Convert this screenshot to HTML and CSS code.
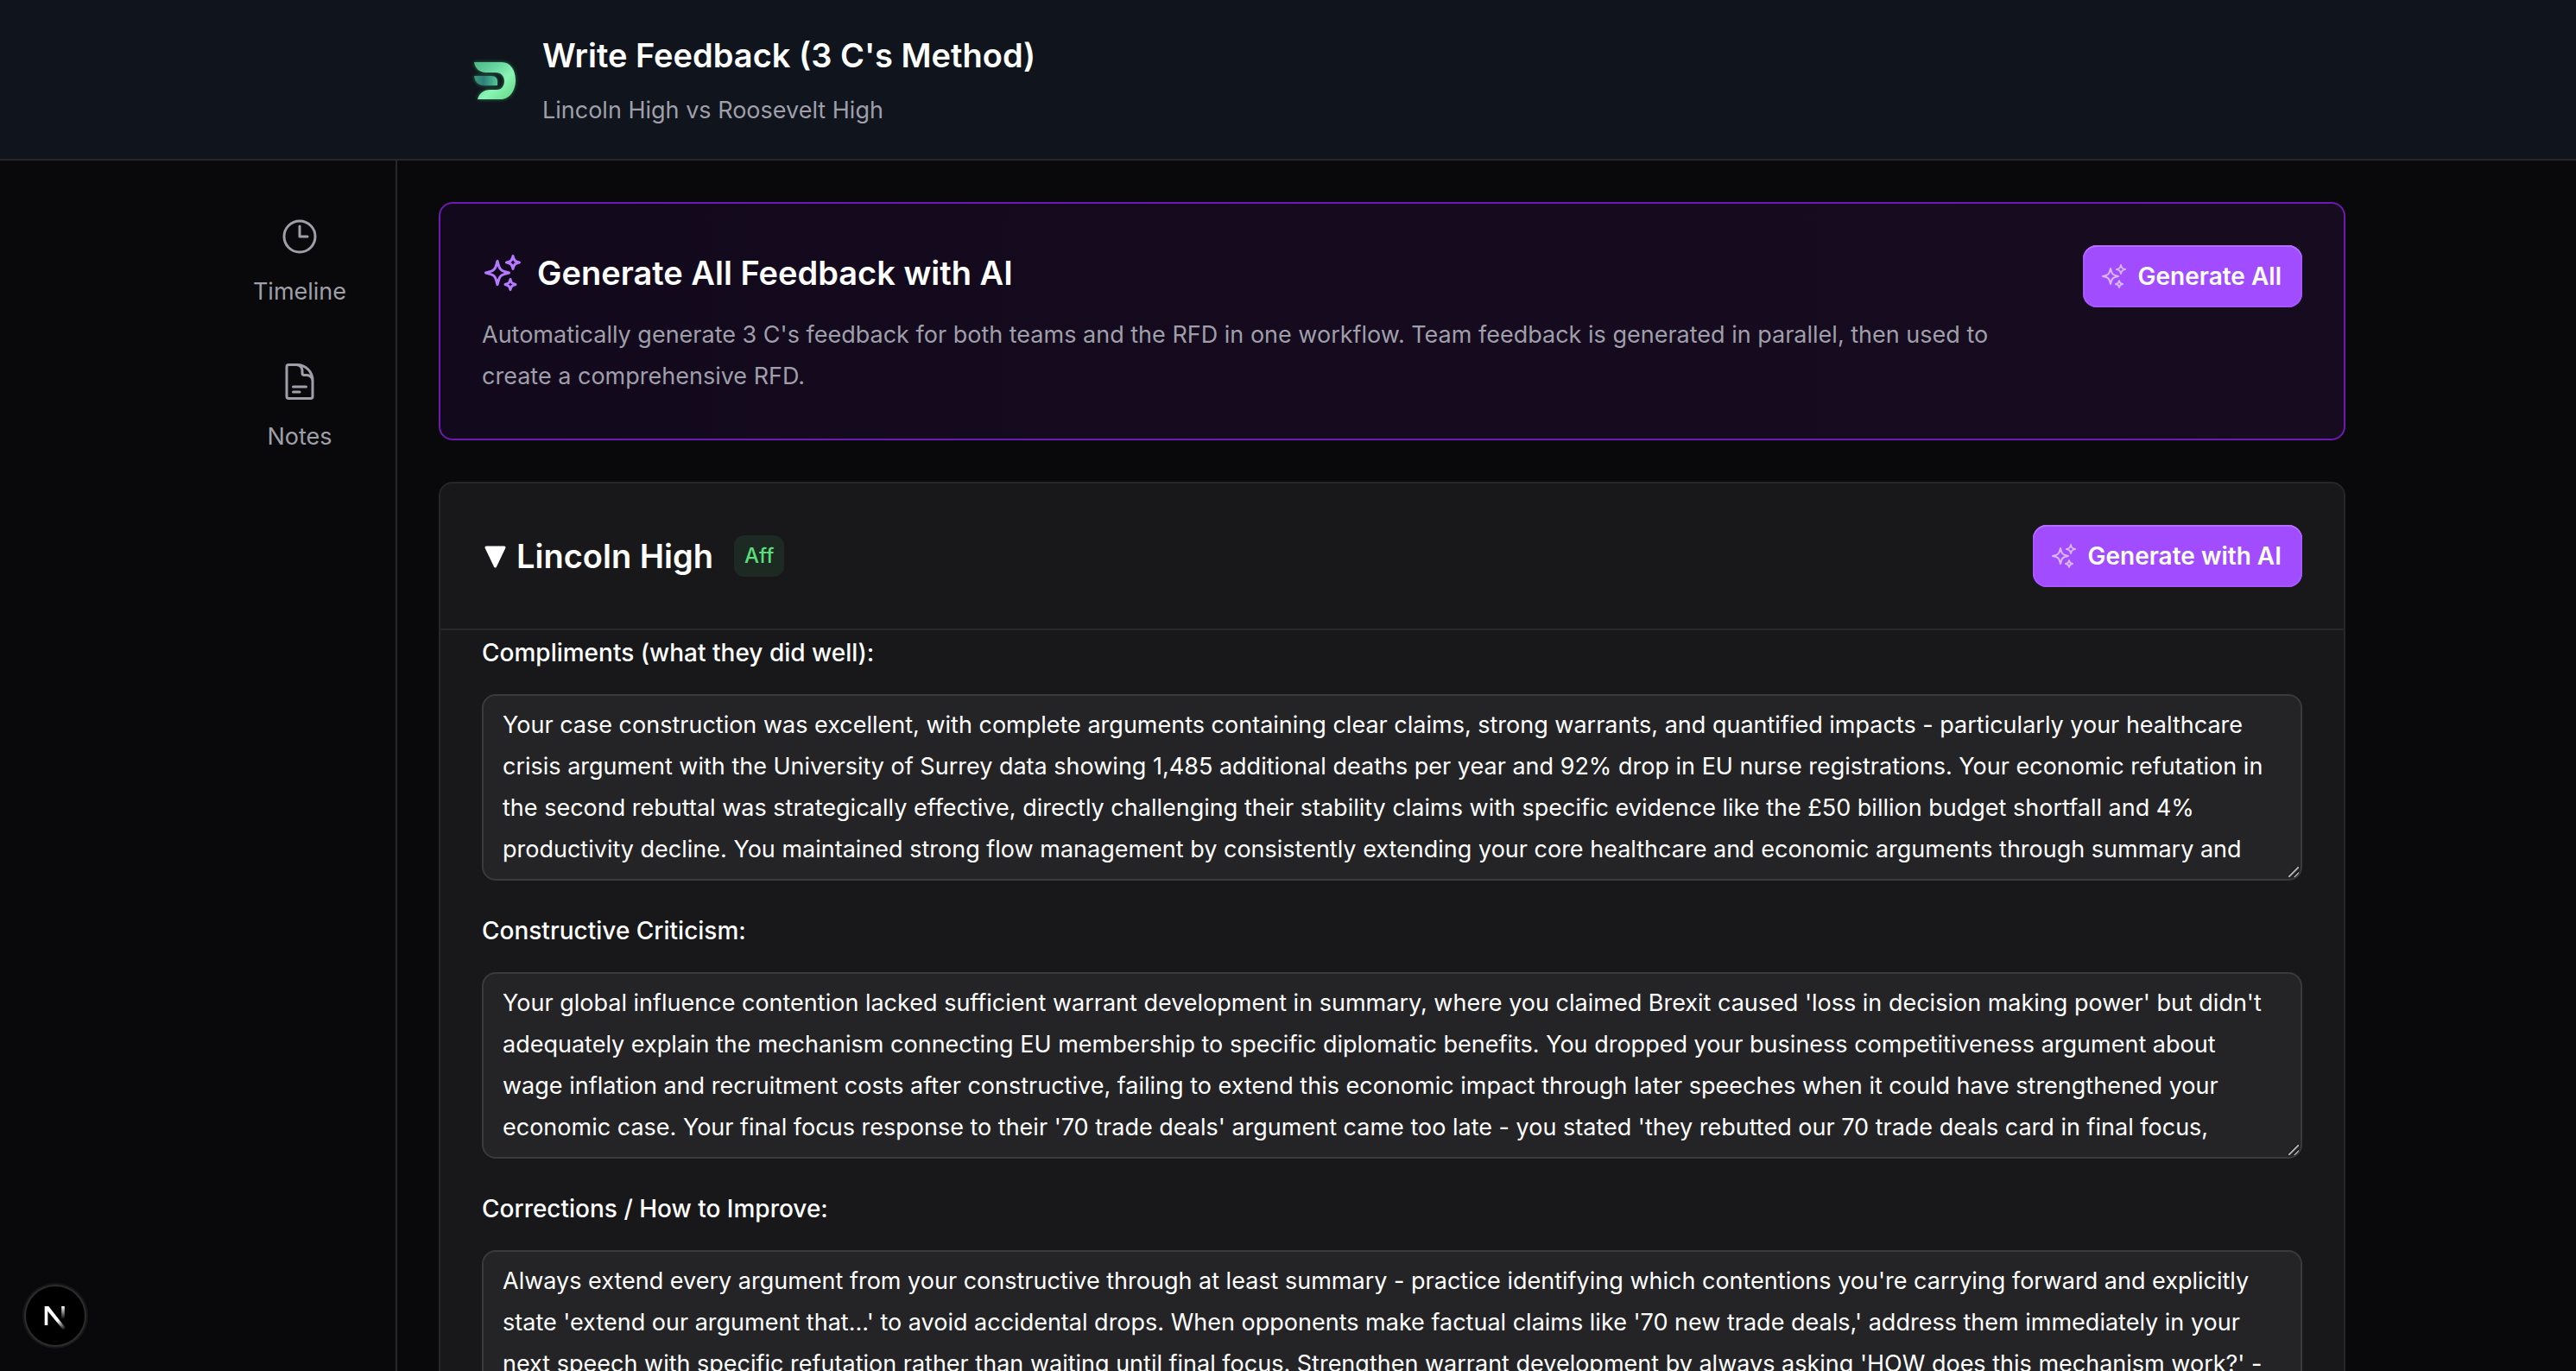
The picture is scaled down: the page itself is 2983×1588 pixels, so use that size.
FILE: index.html
```
<!DOCTYPE html>
<html lang="en">
<head>
    <meta charset="utf-8">
    <meta name="viewport" content="width=device-width, initial-scale=1">
    <title>Write Feedback</title>
    <link rel="stylesheet" href="styles.css">
</head>
<body>
<svg class="sprite" aria-hidden="true">
  <symbol id="sparkles" viewBox="0 0 24 24">
    <path d="M9.813 15.904 9 18.75l-.813-2.846a4.5 4.5 0 0 0-3.09-3.09L2.25 12l2.846-.813a4.5 4.5 0 0 0 3.09-3.09L9 5.25l.813 2.846a4.5 4.5 0 0 0 3.09 3.09L15.75 12l-2.846.813a4.5 4.5 0 0 0-3.09 3.09ZM18.259 8.715 18 9.75l-.259-1.035a3.375 3.375 0 0 0-2.455-2.456L14.25 6l1.036-.259a3.375 3.375 0 0 0 2.455-2.456L18 2.25l.259 1.035a3.375 3.375 0 0 0 2.456 2.456L21.75 6l-1.035.259a3.375 3.375 0 0 0-2.456 2.456ZM16.894 20.567 16.5 21.75l-.394-1.183a2.25 2.25 0 0 0-1.423-1.423L13.5 18.75l1.183-.394a2.25 2.25 0 0 0 1.423-1.423l.394-1.183.394 1.183a2.25 2.25 0 0 0 1.423 1.423l1.183.394-1.183.394a2.25 2.25 0 0 0-1.423 1.423Z"/>
  </symbol>
</svg>
<header class="header">
  <div class="header-inner">
    <svg class="logo" viewBox="0 0 64 64" aria-hidden="true">
      <defs>
        <linearGradient id="logo-outer" x1="0" y1="0" x2="1" y2="1">
          <stop offset="0" stop-color="#4bb886"/>
          <stop offset="0.3" stop-color="#66d3a0"/>
          <stop offset="0.6" stop-color="#8af5b4"/>
          <stop offset="1" stop-color="#5fd67f"/>
        </linearGradient>
        <linearGradient id="logo-inner" x1="0" y1="0" x2="1" y2="0">
          <stop offset="0" stop-color="#3b9a78"/>
          <stop offset="0.4" stop-color="#2f7d7c"/>
          <stop offset="1" stop-color="#4fc890"/>
        </linearGradient>
      </defs>
      <path fill="url(#logo-outer)" d="M9 12h32c10 0 16 9 16 21s-7 22-17 22H13c2-7 7-11 14-11h8c6 0 9-5 9-10 0-6-4-10-10-10H23c-8 0-13-5-14-12Z"/>
      <path fill="url(#logo-inner)" d="M9 28h20c5 0 7 3 7 6v5H21c-7 0-11-4-12-11Z"/>
    </svg>
    <div>
      <h1 class="title">Write Feedback (3 C's Method)</h1>
      <p class="text">Lincoln High vs Roosevelt High</p>
    </div>
  </div>
</header>
<div class="layout">
  <nav class="sidebar">
    <a class="nav-link" href="#timeline">
      <svg class="icon" viewBox="0 0 24 24" aria-hidden="true"><path d="M12 6v6h4.5m4.5 0a9 9 0 1 1-18 0 9 9 0 0 1 18 0Z"/></svg>
      Timeline
    </a>
    <a class="nav-link" href="#notes">
      <svg class="icon" viewBox="0 0 24 24" aria-hidden="true"><path d="M19.5 14.25v-2.625a3.375 3.375 0 0 0-3.375-3.375h-1.5A1.125 1.125 0 0 1 13.5 7.125v-1.5a3.375 3.375 0 0 0-3.375-3.375H8.25m0 12.75h7.5m-7.5 3H12M10.5 2.25H5.625c-.621 0-1.125.504-1.125 1.125v17.25c0 .621.504 1.125 1.125 1.125h12.75c.621 0 1.125-.504 1.125-1.125V11.25a9 9 0 0 0-9-9Z"/></svg>
      Notes
    </a>
  </nav>
  <main class="main">
    <section class="card card-ai">
      <div class="card-ai-body">
        <h2 class="title title-icon"><svg class="icon"><use href="#sparkles"/></svg>Generate All Feedback with AI</h2>
        <p class="text">Automatically generate 3 C's feedback for both teams and the RFD in one workflow. Team feedback is generated in parallel, then used to create a comprehensive RFD.</p>
      </div>
      <button class="button" type="button"><svg class="icon icon-small"><use href="#sparkles"/></svg>Generate All</button>
    </section>

    <section class="card">
      <div class="card-header">
        <h2 class="title title-team">
          <svg class="arrow" viewBox="0 0 28 28" aria-hidden="true"><path d="M5 4h21L15.500 26Z"/></svg>
          Lincoln High
        </h2>
        <span class="badge">Aff</span>
        <button class="button" type="button"><svg class="icon icon-small"><use href="#sparkles"/></svg>Generate with AI</button>
      </div>
      <form class="fields">
        <div class="field">
          <label for="compliments">Compliments (what they did well):</label>
          <textarea id="compliments" rows="4">Your case construction was excellent, with complete arguments containing clear claims, strong warrants, and quantified impacts - particularly your healthcare crisis argument with the University of Surrey data showing 1,485 additional deaths per year and 92% drop in EU nurse registrations. Your economic refutation in the second rebuttal was strategically effective, directly challenging their stability claims with specific evidence like the £50 billion budget shortfall and 4% productivity decline. You maintained strong flow management by consistently extending your core healthcare and economic arguments through summary and</textarea>
        </div>
        <div class="field">
          <label for="criticism">Constructive Criticism:</label>
          <textarea id="criticism" rows="4">Your global influence contention lacked sufficient warrant development in summary, where you claimed Brexit caused 'loss in decision making power' but didn't adequately explain the mechanism connecting EU membership to specific diplomatic benefits. You dropped your business competitiveness argument about wage inflation and recruitment costs after constructive, failing to extend this economic impact through later speeches when it could have strengthened your economic case. Your final focus response to their '70 trade deals' argument came too late - you stated 'they rebutted our 70 trade deals card in final focus,</textarea>
        </div>
        <div class="field">
          <label for="corrections">Corrections / How to Improve:</label>
          <textarea id="corrections" rows="4">Always extend every argument from your constructive through at least summary - practice identifying which contentions you're carrying forward and explicitly state 'extend our argument that...' to avoid accidental drops. When opponents make factual claims like '70 new trade deals,' address them immediately in your next speech with specific refutation rather than waiting until final focus. Strengthen warrant development by always asking 'HOW does this mechanism work?' -</textarea>
        </div>
      </form>
    </section>
  </main>
</div>
<button class="dev-badge" type="button" aria-label="Open dev tools">
  <svg viewBox="0 0 40 40" aria-hidden="true">
    <defs>
      <linearGradient id="n-diagonal" gradientUnits="userSpaceOnUse" x1="23" y1="25" x2="31" y2="36">
        <stop offset="0" stop-color="#fff"/>
        <stop offset="1" stop-color="#fff" stop-opacity="0"/>
      </linearGradient>
      <linearGradient id="n-stem" gradientUnits="userSpaceOnUse" x1="29" y1="9" x2="29" y2="24">
        <stop offset="0" stop-color="#fff"/>
        <stop offset="1" stop-color="#fff" stop-opacity="0"/>
      </linearGradient>
    </defs>
    <path fill="#fff" d="M7.700 9h3.600v22H7.700z"/>
    <path fill="url(#n-diagonal)" d="M7.700 9h4.600l20 25.500-2.800 2.200L9 12Z"/>
    <path fill="url(#n-stem)" d="M27.200 9h3.600v16h-3.600z"/>
  </svg>
</button>
</body>
</html>
```
FILE: styles.css
```
* {
  box-sizing: border-box;
}
body {
  margin: 0;
  overflow: hidden;
  height: 100vh;
  background-color: #09090b;
  color: #ffffff;
  font-family: Inter, sans-serif;
  font-size: 27px;
  line-height: 48px;
}
h1,h2,p {
  margin: 0;
}
.sprite {
  display: none;
}
.title {
  font-size: 38px;
  line-height: 64px;
  font-weight: 600;
}
.text {
  color: #9f9fa9;
}
.icon {
  width: 48px;
  height: 48px;
  flex: none;
  fill: none;
  stroke: currentColor;
  stroke-width: 1.5;
  stroke-linecap: round;
  stroke-linejoin: round;
}
.icon-small {
  width: 32px;
  height: 32px;
  color: #d9b8ff;
}

/* header */
.header {
  background-color: #10141d;
  border-bottom: 2px solid #27272a;
}
.header-inner {
  display: flex;
  align-items: center;
  gap: 24px;
  max-width: 1903px;
  margin: 0 auto;
  padding: 32px 0;
}
.header .text {
  margin-top: 8px;
}
.logo {
  width: 64px;
  height: 64px;
  filter: drop-shadow(0 0 2px #2f7d55);
}

/* layout */
.layout {
  display: flex;
  max-width: 2543px;
  margin: 0 auto;
}
.sidebar {
  display: flex;
  flex-direction: column;
  gap: 24px;
  width: 240px;
  flex: none;
  padding: 48px 0 48px 16px;
  border-right: 2px solid #27272a;
}
.nav-link {
  display: flex;
  flex-direction: column;
  align-items: center;
  gap: 16px;
  padding: 16px;
  color: #9f9fa9;
  text-decoration: none;
}
.main {
  display: flex;
  flex-direction: column;
  gap: 48px;
  flex: 1;
  min-width: 0;
  padding: 48px 47px 48px 48px;
}

/* cards */
.card {
  background-color: #18181b;
  border: 2px solid #27272a;
  border-radius: 16px;
}
.card-ai {
  display: flex;
  align-items: flex-start;
  justify-content: space-between;
  gap: 48px;
  padding: 48px;
  background: linear-gradient(to right, #13091d, #170b1f);
  border-color: #6e19b2;
}
.card-ai-body {
  max-width: 1780px;
}
.title-icon {
  display: flex;
  align-items: center;
  gap: 16px;
}
.title-icon .icon {
  color: #b57aff;
}
.card-ai .text {
  margin-top: 16px;
}
.card-header {
  display: flex;
  align-items: center;
  gap: 24px;
  padding: 48px;
  border-bottom: 2px solid #27272a;
}
.title-team {
  display: flex;
  align-items: center;
  gap: 12px;
}
.arrow {
  width: 28px;
  height: 28px;
  fill: #ffffff;
  stroke: #ffffff;
  stroke-width: 3;
  stroke-linejoin: round;
}
.badge {
  padding: 0 12px;
  border-radius: 12px;
  background-color: #1d2a23;
  color: #5cdd7c;
  font-size: 24px;
  font-weight: 500;
}
.button {
  display: flex;
  align-items: center;
  gap: 12px;
  flex: none;
  height: 72px;
  padding: 0 24px 0 20px;
  border: 0;
  border-radius: 16px;
  background-color: #a24cff;
  box-shadow: inset 0 2px #b56fff, inset 0 0 0 2px #a856ff;
  color: #ffffff;
  font: inherit;
  font-size: 28px;
  font-weight: 600;
}
.card-header .button {
  margin-left: auto;
}

/* form */
.fields {
  display: flex;
  flex-direction: column;
  gap: 34px;
  padding: 2px 48px 48px;
}
.field {
  display: flex;
  flex-direction: column;
  gap: 24px;
}
label {
  font-size: 28px;
  font-weight: 500;
}
textarea {
  display: block;
  width: 100%;
  height: 216px;
  padding: 10px 22px;
  border: 2px solid #3a3a3d;
  border-radius: 16px;
  /* grip lines in the corner */
  background: #242427 linear-gradient(135deg, transparent 6px, #0c0c0d 7px, #b4b4b6 8px, #b4b4b6 9px, transparent 10px, transparent 11px, #0c0c0d 12px, #b4b4b6 13px, #b4b4b6 14px, transparent 15px) no-repeat right 2px bottom 2px / 12px 12px;
  color: #ffffff;
  font: inherit;
  resize: none;
  scrollbar-width: none;
}

.dev-badge {
  position: fixed;
  left: 28px;
  bottom: 28px;
  display: flex;
  align-items: center;
  justify-content: center;
  width: 72px;
  height: 72px;
  padding: 0;
  border: 2px solid #2c2c2c;
  border-radius: 50%;
  background-color: #000000;
  box-shadow: 0 0 0 2px #171717;
}
.dev-badge svg {
  width: 40px;
  height: 40px;
}
```
